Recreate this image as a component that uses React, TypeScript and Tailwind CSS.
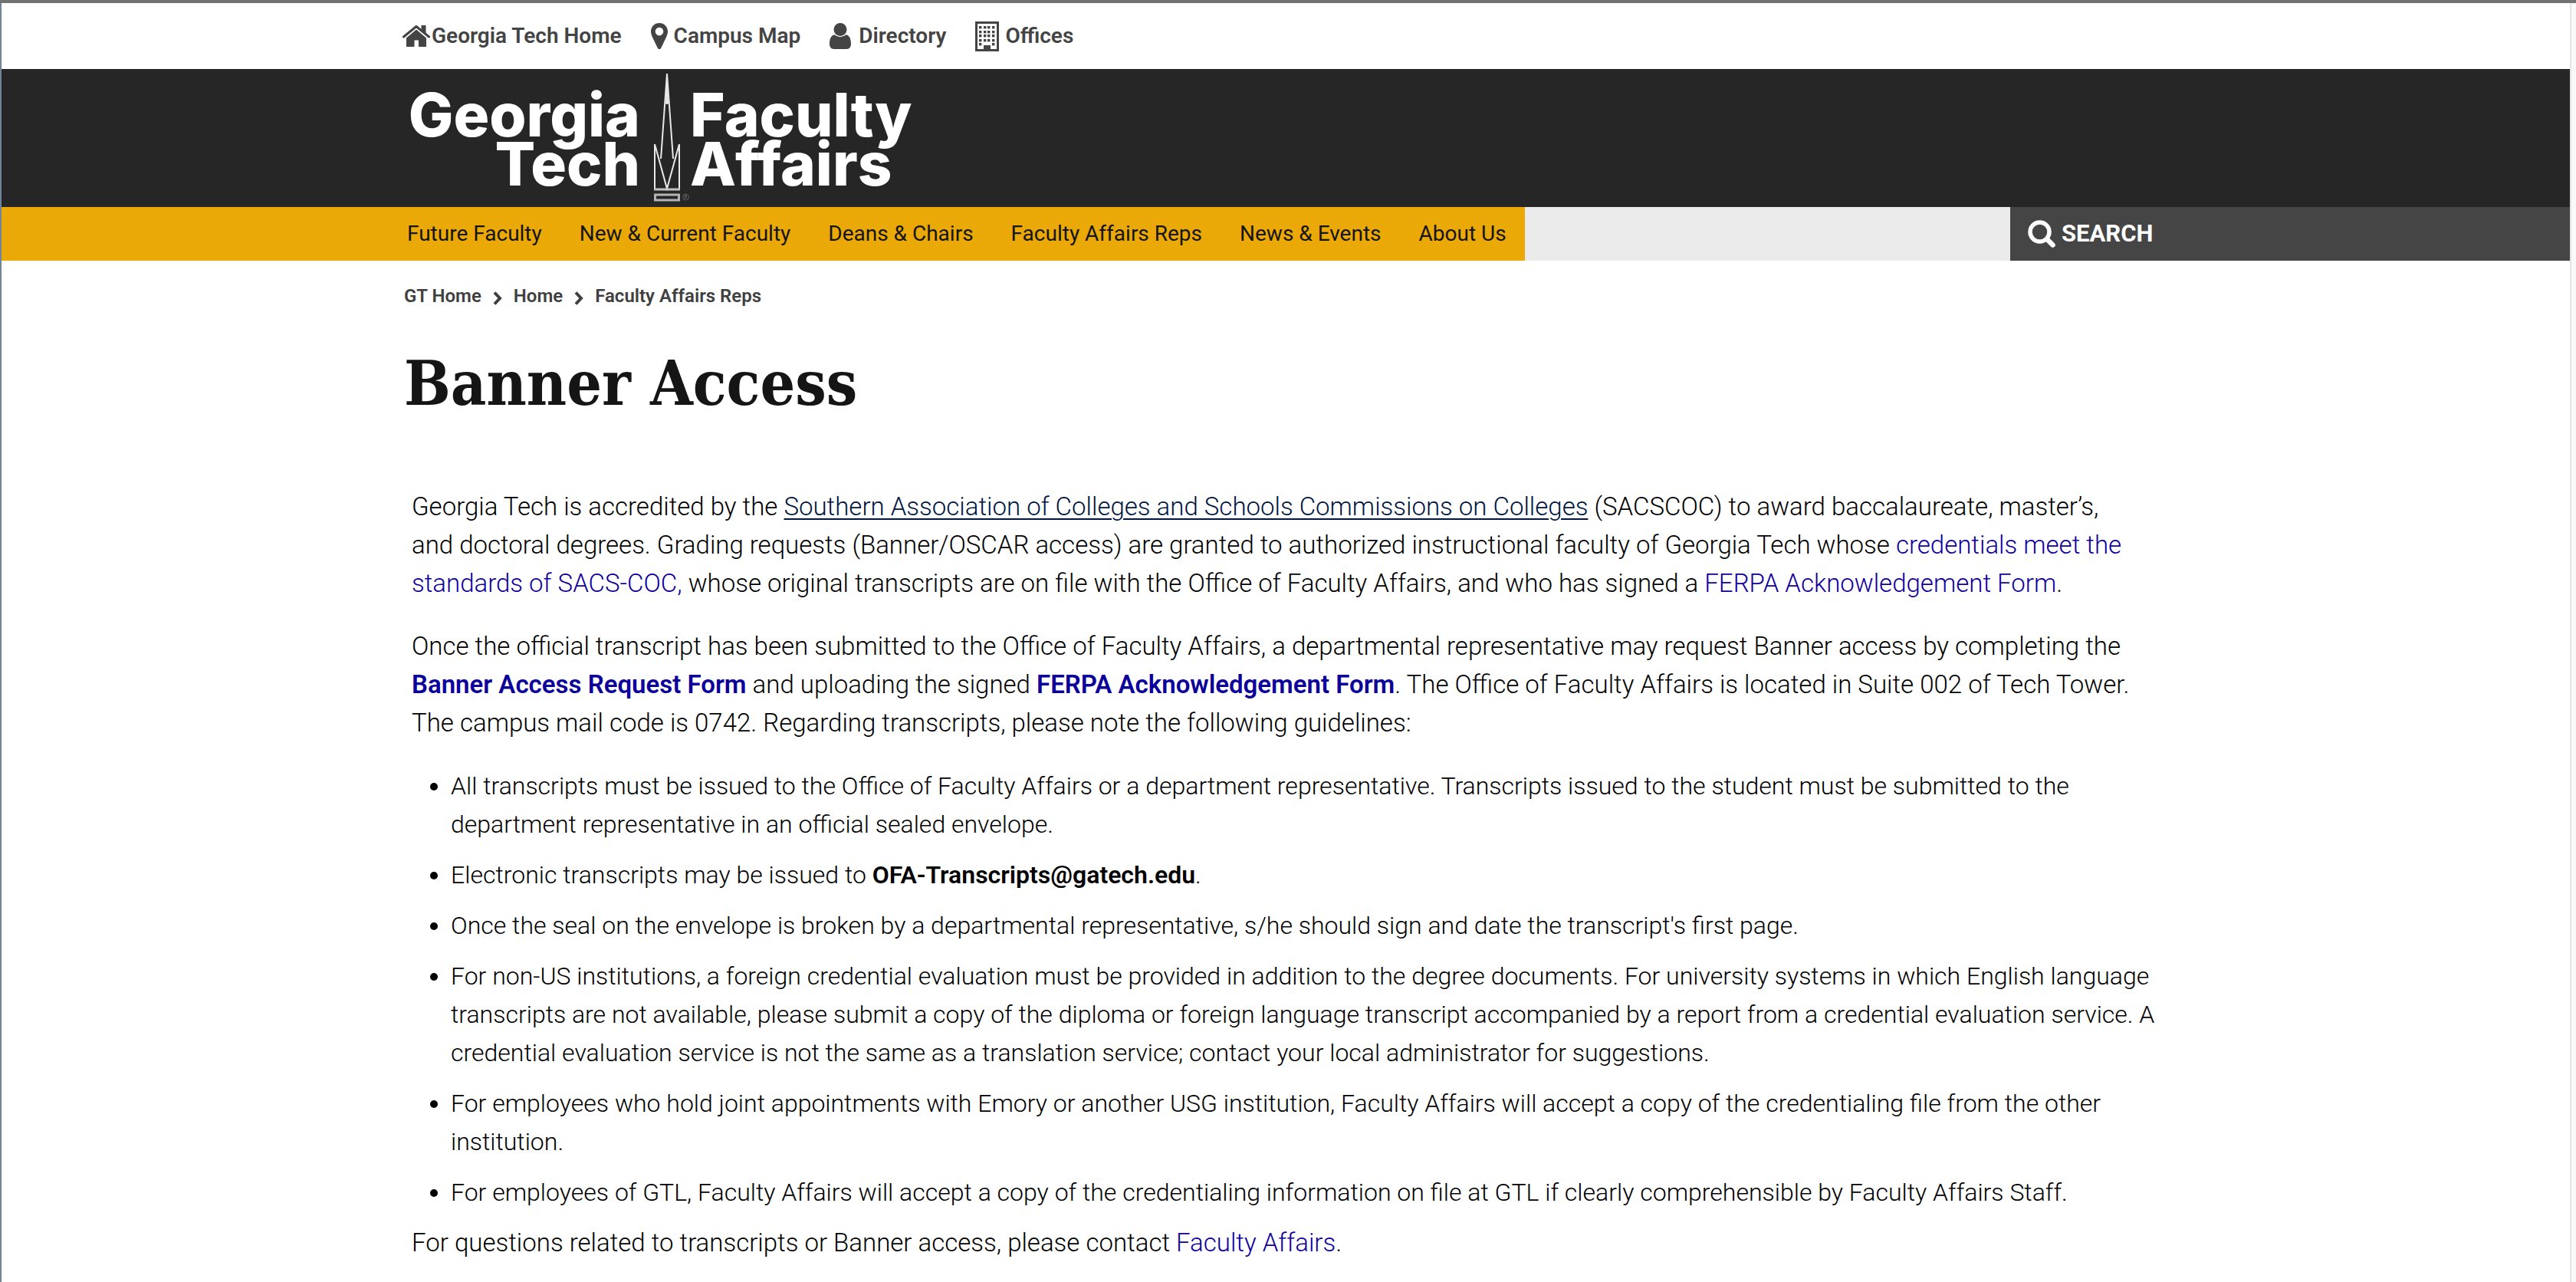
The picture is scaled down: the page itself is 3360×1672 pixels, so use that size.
import type { ReactNode } from "react";

function HomeIcon() {
  return (
    <svg viewBox="0 0 36 28" className="h-[28px] w-[36px]" fill="currentColor" aria-hidden="true">
      <path d="M1.500 15 18 1.500 34.500 15" fill="none" stroke="currentColor" strokeWidth="3" strokeLinecap="round" strokeLinejoin="round" />
      <path d="M24.500 0H30.500V11.500L24.500 6.500Z" />
      <path d="M18 5.500 31 16.500V28H21v-8.500h-5.500V28H5V16.500Z" />
    </svg>
  );
}

function PinIcon() {
  return (
    <svg viewBox="0 0 22 34" className="h-[34px] w-[22px]" fill="currentColor" aria-hidden="true">
      <path
        fillRule="evenodd"
        d="M11 0C4.900 0 0 4.900 0 11c0 3 1 5.200 2.200 8L8.700 32.500c.9 2 3.700 2 4.600 0L19.800 19C21 16.200 22 14 22 11 22 4.900 17.100 0 11 0Zm0 5.800a5.300 5.300 0 1 1 0 10.600 5.300 5.300 0 0 1 0-10.600Z"
      />
    </svg>
  );
}

function PersonIcon() {
  return (
    <svg viewBox="0 0 28 34" className="h-[34px] w-[28px]" fill="currentColor" aria-hidden="true">
      <circle cx="14" cy="8.500" r="8.500" />
      <path d="M6.500 15.200C2 16.200 0 20.500 0 27c0 4 1.800 7 5.500 7h17c3.700 0 5.500-3 5.500-7 0-6.500-2-10.800-6.500-11.800a11 11 0 0 1-15 0Z" />
    </svg>
  );
}

function BuildingIcon() {
  const rows = [6, 12, 17, 23, 28];
  const columns = [5, 11, 16, 22];
  return (
    <svg viewBox="0 0 31 39" className="h-[39px] w-[31px]" fill="currentColor" aria-hidden="true">
      <path fillRule="evenodd" d="M0 0h31v39H0ZM3 3v33h25V3Z" />
      {rows.map((y) =>
        columns.map((x) =>
          y === 28 && (x === 11 || x === 16) ? null : <rect key={`${x}-${y}`} x={x} y={y} width="3.400" height="3.400" />,
        ),
      )}
      <path d="M11 31h9v6h-9Z" />
    </svg>
  );
}

function SearchIcon() {
  return (
    <svg viewBox="0 0 36 36" className="h-[36px] w-[36px]" fill="none" stroke="currentColor" aria-hidden="true">
      <circle cx="15.500" cy="15.500" r="12.500" strokeWidth="5.500" />
      <path d="M25 25l7.500 7.500" strokeWidth="6.500" strokeLinecap="round" />
    </svg>
  );
}

function Chevron() {
  return (
    <svg viewBox="0 0 12 18" className="mt-[6px] h-[18px] w-[12px]" fill="none" stroke="currentColor" strokeWidth="4" aria-hidden="true">
      <path d="M2 1.500 9 9l-7 7.500" />
    </svg>
  );
}

function Tower() {
  return (
    <svg viewBox="0 0 48 170" className="h-[170px] w-[48px]" fill="none" stroke="#e8e8e8" strokeWidth="2" aria-hidden="true">
      <path d="M18 1 10 112M18 1l8 111M18 1v40" />
      <path d="M16.500 40 18 1l1.500 39Z" fill="#e8e8e8" strokeWidth="1" />
      <path d="M2 93v60M34 93v60M2 93l16 58 16-58M4 100l14 51 14-51" />
      <path d="M1 152h34" strokeWidth="3" stroke="#c4c4c4" />
      <rect x="2.500" y="159" width="31" height="7" strokeWidth="3" stroke="#b4b4b4" />
      <circle cx="42.500" cy="162" r="4" strokeWidth="1" stroke="#5c5c5c" />
      <path d="M41 164.500v-5h2.500v2.500H41m1.500 0 1.500 2.500" strokeWidth="1" stroke="#5c5c5c" />
    </svg>
  );
}

const quickLinks = [
  { label: "Georgia Tech Home", icon: <HomeIcon />, gap: "gap-0.5" },
  { label: "Campus Map", icon: <PinIcon />, gap: "gap-2" },
  { label: "Directory", icon: <PersonIcon />, gap: "gap-2.5" },
  { label: "Offices", icon: <BuildingIcon />, gap: "gap-2" },
];

const menu = ["Future Faculty", "New & Current Faculty", "Deans & Chairs", "Faculty Affairs Reps", "News & Events", "About Us"];

const crumbs = ["GT Home", "Home", "Faculty Affairs Reps"];

function TextLink({ children, strong = false }: { children: ReactNode; strong?: boolean }) {
  return (
    <a href="#" className={strong ? "font-semibold text-[#0b0099]" : "text-[#10009c]"}>
      {children}
    </a>
  );
}

export default function App() {
  return (
    <div className="min-h-screen border-t-4 border-[#727272] bg-[#f9f9f9] pr-[6px] font-['Roboto',sans-serif] text-[#151515]">
      <div className="min-h-[1668px] border-r-2 border-l-2 border-r-[#e4e4e4] border-l-[#71849c] bg-white">
        <div className="h-[86px] px-4">
          <ul className="mx-auto flex h-full max-w-[2340px] items-center gap-[38px] pl-[18px] text-[28px] font-semibold text-[#444]">
            {quickLinks.map((link) => (
              <li key={link.label}>
                <a href="#" className={`flex items-center ${link.gap}`}>
                  {link.icon}
                  {link.label}
                </a>
              </li>
            ))}
          </ul>
        </div>

        <header className="h-[180px] bg-[#262626] px-4">
          <a
            href="#"
            className="mx-auto flex h-full max-w-[2340px] items-center font-['Inter',sans-serif] text-[78px] leading-[64px] font-extrabold text-white"
          >
            <span className="w-[328px] pt-1 text-right">
              Georgia
              <br />
              Tech
            </span>
            <span className="ml-[17px]">
              <Tower />
            </span>
            <span className="pt-1">
              Faculty
              <br />
              Affairs
            </span>
          </a>
        </header>

        <div className="flex h-[70px]">
          <div className="flex-1 bg-[#eba907]" />
          <div className="flex w-full max-w-[2340px]">
            <nav className="bg-[#eba907] px-[24px]">
              <ul className="flex h-full items-center gap-[49px] text-[28px]">
                {menu.map((item) => (
                  <li key={item}>
                    <a href="#" className="whitespace-nowrap">
                      {item}
                    </a>
                  </li>
                ))}
              </ul>
            </nav>
            <div className="flex-1 bg-[#ebebeb]" />
            <button type="button" className="flex w-[225px] items-center gap-[8px] bg-[#454545] pl-[23px] text-[31px] font-bold text-white">
              <SearchIcon />
              SEARCH
            </button>
          </div>
          <div className="flex-1 bg-[#454545]" />
        </div>

        <div className="mx-auto max-w-[2300px]">
          <nav aria-label="Breadcrumb" className="pt-[30px]">
            <ol className="flex items-center gap-[15px] text-[24px] leading-[32px] font-semibold text-[#3f3f3f]">
              {crumbs.map((crumb, index) => (
                <li key={crumb} className="flex items-center gap-[15px]">
                  {index > 0 && <Chevron />}
                  <a href="#">{crumb}</a>
                </li>
              ))}
            </ol>
          </nav>

          <h1 className="mt-[48px] font-['DejaVu_Serif_Condensed','DejaVu_Serif',serif] text-[80px] leading-[100px] font-bold">Banner Access</h1>

          <main className="mt-[86px] px-[10px] text-[32px] leading-[50px] font-light text-black">
            <p className="mb-8 max-w-[2250px] text-[33px]">
              Georgia Tech is accredited by the{" "}
              <a href="#" className="text-[#001540] underline decoration-2 underline-offset-4">
                Southern Association of Colleges and Schools Commissions on Colleges
              </a>{" "}
              (SACSCOC) to award baccalaureate, master’s, and doctoral degrees. Grading requests (Banner/OSCAR access) are granted to authorized
              instructional faculty of Georgia Tech whose <TextLink>credentials meet the standards of SACS-COC,</TextLink> whose original
              transcripts are on file with the Office of Faculty Affairs, and who has signed a <TextLink>FERPA Acknowledgement Form</TextLink>.
            </p>
            <p className="mb-8 max-w-[2250px] text-[33px]">
              Once the official transcript has been submitted to the Office of Faculty Affairs, a departmental representative may request Banner
              access by completing the <TextLink strong>Banner Access Request Form</TextLink> and uploading the signed{" "}
              <TextLink strong>FERPA Acknowledgement Form</TextLink>. The Office of Faculty Affairs is located in Suite 002 of Tech Tower. The
              campus mail code is 0742. Regarding transcripts, please note the following guidelines:
            </p>
            <ul className="list-disc space-y-4 pl-[51px]">
              <li>
                All transcripts must be issued to the Office of Faculty Affairs or a department representative. Transcripts issued to the student
                must be submitted to the department representative in an official sealed envelope.
              </li>
              <li>
                Electronic transcripts may be issued to <strong className="font-semibold">OFA-Transcripts@gatech.edu</strong>.
              </li>
              <li>
                Once the seal on the envelope is broken by a departmental representative, s/he should sign and date the transcript's first page.
              </li>
              <li>
                For non-US institutions, a foreign credential evaluation must be provided in addition to the degree documents. For university
                systems in which English language transcripts are not available, please submit a copy of the diploma or foreign language
                transcript accompanied by a report from a credential evaluation service. A credential evaluation service is not the same as a
                translation service; contact your local administrator for suggestions.
              </li>
              <li>
                For employees who hold joint appointments with Emory or another USG institution, Faculty Affairs will accept a copy of the
                credentialing file from the other institution.
              </li>
              <li>
                For employees of GTL, Faculty Affairs will accept a copy of the credentialing information on file at GTL if clearly comprehensible
                by Faculty Affairs Staff.
              </li>
            </ul>
            <p className="mt-4 text-[33px]">
              For questions related to transcripts or Banner access, please contact <TextLink>Faculty Affairs</TextLink>.
            </p>
          </main>
        </div>
      </div>
    </div>
  );
}
